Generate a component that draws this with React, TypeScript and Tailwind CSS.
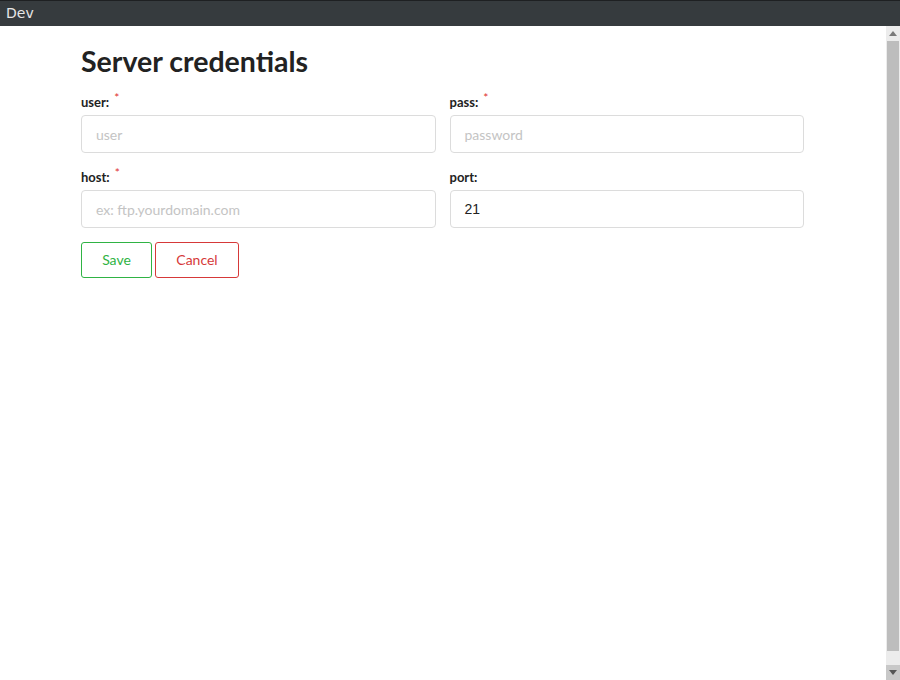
import React from "react";

function Field({ label, required, placeholder, value }: { label: string; required?: boolean; placeholder?: string; value?: string }) {
  return (
    <div className="flex flex-col">
      <label className="h-[22px] text-[13px] font-bold text-[#222] leading-none flex items-start pt-[4px]">
        {label}
        {required && <span className="text-[#e03131] text-[12px] font-normal ml-[5px] -mt-[4px]">*</span>}
      </label>
      <div className="h-[38px] mt-[1px] border border-[#dcdcdc] rounded-[4px] flex items-center px-[14px]">
        {value ? (
          <span className="text-[14px] text-[#222]" style={{ fontFamily: '"Liberation Sans", Arial, sans-serif' }}>{value}</span>
        ) : (
          <span className="text-[14px] text-[#c4c4c4]">{placeholder}</span>
        )}
      </div>
    </div>
  );
}

export default function App() {
  return (
    <div className="w-[900px] h-[680px] flex flex-col bg-white overflow-hidden" style={{ fontFamily: 'Lato, "Open Sans", sans-serif' }}>
      <div className="h-[26px] bg-[#363b3e] border-t border-[#1e2022] flex items-center px-[6px]">
        <span className="text-[14px] text-[#e6e6e6]" style={{ fontFamily: '"DejaVu Sans", sans-serif' }}>Dev</span>
      </div>
      <div className="flex-1 flex">
        <div className="flex-1 flex">
          <div className="w-[723px] ml-[81px] pt-[18px]">
            <h1 className="text-[28.5px] font-bold text-[#222] leading-[34px]">Server credentials</h1>
            <div className="grid grid-cols-2 gap-x-[14px] gap-y-[14px] mt-[14px]">
              <Field label="user:" required placeholder="user" />
              <Field label="pass:" required placeholder="password" />
              <Field label="host:" required placeholder="ex: ftp.yourdomain.com" />
              <Field label="port:" value="21" />
            </div>
            <div className="flex gap-[3px] mt-[14px]">
              <button className="w-[71px] h-[36px] border border-[#2fb344] rounded-[3px] text-[#2fb344] text-[14px] leading-none pb-[1px]">Save</button>
              <button className="w-[84px] h-[36px] border border-[#d63939] rounded-[3px] text-[#d63939] text-[14px] leading-none pb-[1px]">Cancel</button>
            </div>
          </div>
        </div>
        <div className="w-[14px] bg-[#ececec] flex flex-col">
          <div className="h-[15px] flex items-center justify-center">
            <svg width="8" height="5" viewBox="0 0 8 5"><path d="M4 0L8 5H0z" fill="#7a7a7a" /></svg>
          </div>
          <div className="flex-1 flex flex-col">
            <div className="h-[610px] bg-[#bdbdbd] mx-[1px]" />
          </div>
          <div className="h-[15px] bg-[#c8c8c8] flex items-center justify-center">
            <svg width="8" height="5" viewBox="0 0 8 5"><path d="M0 0H8L4 5z" fill="#555" /></svg>
          </div>
        </div>
      </div>
    </div>
  );
}
